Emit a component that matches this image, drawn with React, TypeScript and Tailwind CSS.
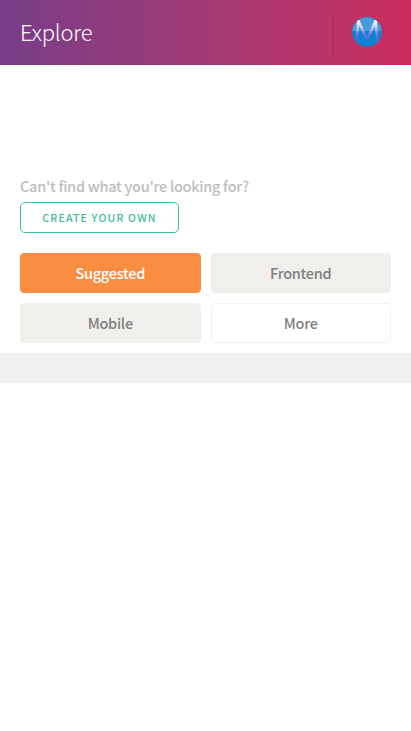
import clsx from "clsx"

const categories = [
  { name: "Suggested", style: "border-[#f98e43] bg-[#f98e43] text-white" },
  { name: "Frontend", style: "border-[#f0efeb] bg-[#f0efeb] text-[#808080]" },
  { name: "Mobile", style: "border-[#f0efeb] bg-[#f0efeb] text-[#808080]" },
  { name: "More", style: "border-[#f0f0f0] bg-white text-[#808080]" },
]

function Avatar() {
  return (
    <svg viewBox="0 0 30 30" className="size-[30px]" aria-label="Profile">
      <defs>
        <clipPath id="disc">
          <circle cx="15" cy="15" r="14.8" />
        </clipPath>
        <linearGradient id="stroke" gradientUnits="userSpaceOnUse" x1="0" y1="3" x2="0" y2="26">
          <stop offset="0" stopColor="#ffffff" />
          <stop offset="0.3" stopColor="#cdd3f6" />
          <stop offset="0.65" stopColor="#6a6fe0" />
          <stop offset="1" stopColor="#2a72d8" />
        </linearGradient>
      </defs>
      <g clipPath="url(#disc)">
        <rect width="30" height="30" fill="#0a82d2" />
        <rect width="30" height="14" fill="#439dda" />
        <path
          d="M3.6 24 L5 3 L7.4 3 L15 19.8 L22.6 3 L25 3 L26.4 24 L24 24 L22.8 9 L15 25.5 L7.2 9 L6 24 Z"
          fill="url(#stroke)"
        />
      </g>
    </svg>
  )
}

export default function App() {
  return (
    <div className="min-h-screen bg-white font-['Noto_Sans_CJK_SC','Open_Sans',sans-serif]">
      <header className="flex h-[65px] items-center justify-between bg-linear-to-r from-[#783c88] to-[#cc2b5d] pl-5">
        <h1 className="pb-[3px] text-[22px] leading-none font-light tracking-[-0.2px] text-white">Explore</h1>
        <div className="mt-[5px] flex h-[45px] w-[78px] items-center border-l border-[#b0285d] pb-[6px] pl-[18px]">
          <Avatar />
        </div>
      </header>

      <main>
        <section className="px-5 pt-[111px] pb-[10px]">
          <p className="text-[14.5px] leading-[20px] font-medium tracking-[-0.27px] text-[#bdbdbd]">
            Can't find what you're looking for?
          </p>
          <button className="mt-[6px] block h-[31px] w-[159px] rounded-[5px] border border-[#3ebc99] text-[10.5px] font-medium tracking-[1.2px] text-[#3ebc99]">
            CREATE YOUR OWN
          </button>

          <div className="mt-5 grid grid-cols-2 gap-[10px]">
            {categories.map(({ name, style }) => (
              <button
                key={name}
                className={clsx(
                  "h-10 rounded-[4px] border text-[14.5px] font-medium tracking-[-0.27px]",
                  style
                )}
              >
                {name}
              </button>
            ))}
          </div>
        </section>
        <div className="h-[30px] bg-[#f0f0f0]" />
      </main>
    </div>
  )
}
